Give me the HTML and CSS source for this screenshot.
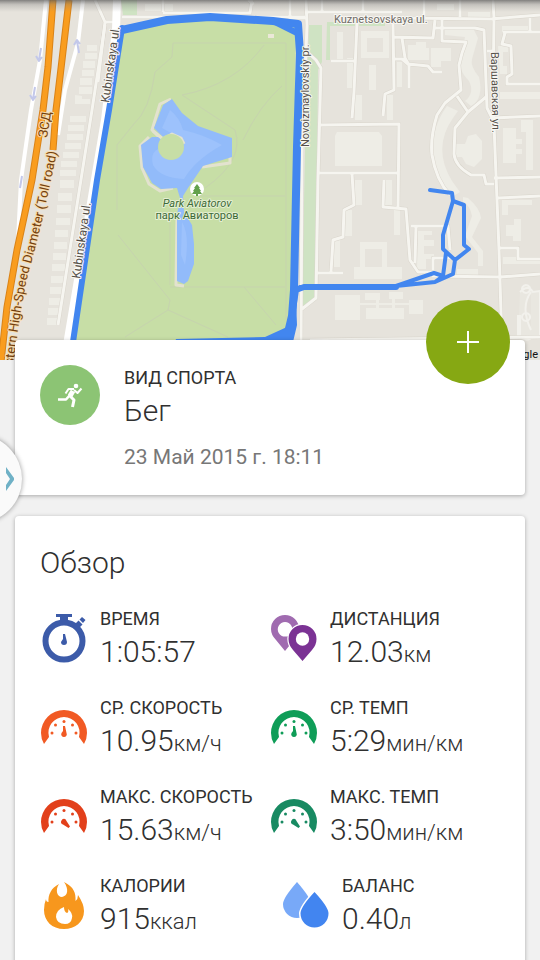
FILE: index.html
```html
<!DOCTYPE html>
<html lang="ru">
<head>
  <meta charset="UTF-8" />
  <meta name="viewport" content="width=device-width, initial-scale=1.0" />
  <title>Бег – 23 Май 2015</title>
  <link rel="stylesheet" href="styles.css">
</head>
<body>
  <div class="wrapper">
    <div class="map">
      <svg viewBox="0 0 540 360" preserveAspectRatio="xMidYMid slice" role="img" aria-label="Маршрут">
        <defs>
          <linearGradient id="topShade" x1="0" y1="0" x2="0" y2="1">
            <stop offset="0" stop-color="#555" stop-opacity="0.7" />
            <stop offset="0.4" stop-color="#777" stop-opacity="0.3" />
            <stop offset="1" stop-color="#888" stop-opacity="0" />
          </linearGradient>
          <path id="tollPath" d="M-8 450 L14 360 Q19 318 27 278 Q36 246 43 217 L57 152" />
        </defs>
        <rect width="540" height="360" fill="#e6e3dc" />

        <!-- green areas -->
        <path class="park" d="M122 30 L170 20 L210 18 L296 24 L293 300 L290 330 L265 342 L73 342 Z" />
        <path class="lawn" d="M309 25 H322 V62 L318 70 L316 300 L302 310 L305 150 Z M327 22 L385 22 V26 H330 V60 H326 Z M121 0 H137 V15 H123 Z" />

        <!-- buildings -->
        <g class="building">
          <path d="M87 45h10v6h-10z M85 53h12v6h-12z M83 61h12v7h-12z M82 70h12v6h-12z M80 78h12v7h-12z M79 87h13v7h-13z M75 95l7 1v8h-7z M82 99h8v5h-8z" />
          <path d="M70 116h16v6h-16z M68 125h16v6h-16z M67 134h16v6h-16z M65 143h16v6h-16z M63 152h16v6h-16z M61 161h16v6h-16z M60 170h16v6h-16z M60 180h14v8h-14z M58 193h14v8h-14z M57 205h14v8h-14z M56 218h14v7h-14z M55 230h13v7h-13z M54 242h13v7h-13z M53 253h13v7h-13z M52 264h13v7h-13z M51 276h13v7h-13z M50 287h12v7h-12z M49 298h11v7h-11z M48 308h11v7h-11z M47 318h10v7h-10z" />
          <path fill-rule="evenodd" d="M361 31h28v27h-28z M367 38v14h16v-14z" />
          <path d="M337 32h6v28h-6z M347 58h6v30h-6z M369 65h7v25h-7z M397 62h5v25h-5z M355 95h7v25h-7z M387 95h6v25h-6z" />
          <path d="M337 132h42l3 4v30h-47v-30z" />
          <path d="M408 45h8v-3h10v6h3v12h-21z M431 48h20v13h-10v6h-10z" />
          <path d="M145 4h28v7h-28z M437 4h17v6h-17z M468 12h22v5h-22z" />
          <path d="M445 29l28-1 5 10-6 21q-2 7 7 18q5 22-8 29l-6-5q10-8 4-20q-12-12-8-24l4-20-20-2z" />
          <path d="M447 106l11 5-5 7q-21 30-1 63l8 11-8 5q-20-19-20-46q1-26 15-45z" />
          <path d="M453 144h12l3-8 8-2 6 7v18l-8 8-8-3-4-7h-9z" />
          <path d="M355 180h7v25h-7z M384 180h8v25h-8z M344 210h8v26h-8z M334 240h6v27h-6z M394 210h6v25h-6z" />
          <path fill-rule="evenodd" d="M354 267h6v-25h27v25h15v12h-48z M365 249v18h17v-18z" />
          <path d="M418 231h14v4h-8v5h10v6h-10v8h10v5h-8v10h-9z M463 197l5 1q12 10 13 20l-9 19 11 14v15h-5v-13l-13-17 7-20q-2-11-9-14z M457 269h21v6h-21z" />
          <path d="M335 295h25v25h-25z M365 293h15v7h-15z M389 292h14v7h-14z M366 308h38v11h-38z M409 300h14v14h-14z M376 299h3v10h-3z M392 299h3v10h-3z M359 303h50v2h-50z" />
          <path d="M503 128h13v35h-13z M516 139h6v5h-6z M516 149h6v5h-6z M521 120h12v50h-7v-38h-5z M502 26h28v6h-28z M498 46h10v6h-5v14h4v8h-7z M500 92h40v7h-40z" />
          <path d="M502 200h30v5h-24v10h-6z M506 225h8v-6h7v22h-8v-5h-7z M503 257h37v7h-37z" />
        </g>
        <path class="stadium" d="M520 292q8-8 13 0l7-1v46l-7-1q-6 7-13 0v-20h-2v20 M526 285a4 4 0 1 0 .1 0 M526 313a4 4 0 1 0 .1 0 M531 292q-11 15 0 38" />

        <!-- minor roads, drawn as a grey casing with a light line over it -->
        <g class="casing">
          <path d="M122 17 H305 M163 12 V0 M163 13 H250 L252 0 M254 4 L248 0 M290 0 V20 M95 0 l10 22 h14 M105 22 l-7 60" />
          <path d="M306 0 L307 25 L302 150 L301 345 M290 18 H306 M306 51 L316 60 L321 68 L318 180 L316 298 L302 309" />
          <path d="M305 12 H402 M322 0 V12 M424 0 V17 M363 0 V12 M402 18 L490 19 L540 15 M460 0 V17 M493 0 L494 18 L493 100 L499 250 L502 344" />
          <path d="M357 23 L354 92 L352 118 M331 61 H356 M393 24 L394 90 L385 94 L383 116 M393 37 L433 38 L435 20 M393 59 H402 L408 64 L428 66 L433 72 H442 M402 38 L405 58 L409 65 V88 M435 28 H475 L484 30 L487 108 L492 118 L540 116 M442 20 V41 L466 42 L462 53 L459 65 L461 90 L445 103 L437 115 Q430 138 432 155 Q436 180 450 195 M457 96 L468 112 L486 97 M468 112 L455 128 L454 154 Q455 166 471 175 L484 175 L486 184 H494" />
          <path d="M320 125 L399 124 L398 208 M319 173 H398 M352 174 L354 205 L344 210 L343 237 L333 240 L331 272 M317 273 H343 M384 180 L383 207 L406 209 L410 260 L418 272 H435 M411 226 H448 L450 250 M416 226 L415 263 M433 270 V258 H452" />
          <path d="M503 32 H540 M505 33 L502 44 L511 46 L512 74 L507 77 V84 H540 M530 18 V32 M487 51 H494 M494 178 L540 177 M498 198 L540 196 M500 248 H518 V259 H540 M432 276 L500 277 L540 274 M310 340 L540 337" />
          <path d="M105 25 L92 110 L58 325 M79 208 H93" />
        </g>
        <g class="street">
          <path d="M122 17 H305 M163 12 V0 M163 13 H250 L252 0 M254 4 L248 0 M290 0 V20 M95 0 l10 22 h14 M105 22 l-7 60" />
          <path d="M306 0 L307 25 L302 150 L301 345 M290 18 H306 M306 51 L316 60 L321 68 L318 180 L316 298 L302 309" />
          <path d="M305 12 H402 M322 0 V12 M424 0 V17 M363 0 V12 M402 18 L490 19 L540 15 M460 0 V17 M493 0 L494 18 L493 100 L499 250 L502 344" />
          <path d="M357 23 L354 92 L352 118 M331 61 H356 M393 24 L394 90 L385 94 L383 116 M393 37 L433 38 L435 20 M393 59 H402 L408 64 L428 66 L433 72 H442 M402 38 L405 58 L409 65 V88 M435 28 H475 L484 30 L487 108 L492 118 L540 116 M442 20 V41 L466 42 L462 53 L459 65 L461 90 L445 103 L437 115 Q430 138 432 155 Q436 180 450 195 M457 96 L468 112 L486 97 M468 112 L455 128 L454 154 Q455 166 471 175 L484 175 L486 184 H494" />
          <path d="M320 125 L399 124 L398 208 M319 173 H398 M352 174 L354 205 L344 210 L343 237 L333 240 L331 272 M317 273 H343 M384 180 L383 207 L406 209 L410 260 L418 272 H435 M411 226 H448 L450 250 M416 226 L415 263 M433 270 V258 H452" />
          <path d="M503 32 H540 M505 33 L502 44 L511 46 L512 74 L507 77 V84 H540 M530 18 V32 M487 51 H494 M494 178 L540 177 M498 198 L540 196 M500 248 H518 V259 H540 M432 276 L500 277 L540 274 M310 340 L540 337" />
          <path d="M105 25 L92 110 L58 325 M79 208 H93" />
        </g>

        <!-- main roads -->
        <path class="road" d="M46 0 L40 60 L31 110 L21 180 L18 240 M83 0 L78 43 L65 90 L58 135" />
        <path class="road road-wide" d="M117 0 L116 30 L105 120 L67 345" />
        <g class="highway-edge">
          <path d="M53 0 L48 67 L43 110 L32 180 L17 250 L7 307 L1 362" />
          <path d="M69 0 L60 77 L56 110 L53 150" />
        </g>
        <g class="highway">
          <path d="M53 0 L48 67 L43 110 L32 180 L17 250 L7 307 L1 362" />
          <path d="M69 0 L60 77 L56 110 L53 150" />
        </g>
        <path class="oneway" d="M41 48 L39 60 M36 56 l3 5 3-4 M35 87 L33 99 M30 95 l3 5 3-4 M79 53 L77 41 M74 45 l3-5 3 4 M22 176 L20 188" />

        <!-- park -->
        <path class="trail" d="M173 43 L172 57 L155 72 Q150 110 133 125 L117 145 V210 M173 43 H286 V320 M264 45 Q235 85 182 95 M182 95 L235 130 Q245 160 205 188 M282 86 Q260 105 243 140 M118 235 L170 300 L168 310 L228 337 M168 310 L125 337 M170 287 H285 M244 287 L276 325 M200 196 H285 M170 200 V285" />
        <path class="shore" d="M171 99 L160 104 L152 130 L160 138 M149 137 L140 146 L142 168 L149 184 L160 191 L173 188 M202 167 L230 163 V156 M177 215 L176 285 L184 286" />
        <path class="water" d="M172 99 L163 105 L154 128 L163 137 L152 137 L141 145 L143 167 L152 183 L161 189 L177 188 L180 198 L177 215 V281 L184 284 L188 281 L194 264 L194 244 L192 225 L184 212 L183 196 L188 188 L203 166 L232 157 V138 L198 126 L182 113 Z" />
        <path class="water-deep" d="M170 110 Q180 118 183 130 Q205 135 222 145 Q195 160 184 179 Q160 178 153 165 Q150 153 158 149 L171 160 L184 149 L180 138 L162 128 Z M182 222 Q190 235 185 265 L181 255 Z" />
        <path class="shore" d="M153 131 L163 139 L172 134 L181 138 L184 144" />
        <circle cx="171" cy="147" r="13" fill="#c7dea6" />
        <rect x="268" y="34" width="6" height="4" fill="#ebe8d8" />
        <circle cx="197" cy="189" r="7" fill="#fff" />
        <path d="M197 184 l3 4h-1l2 3h-1l2 3h-4v2h-2v-2h-4l2-3h-1l2-3h-1z" fill="#63a14c" />

        <!-- recorded track -->
        <g class="track">
          <path class="track-thick" d="M122 30 L167 20 L210 17 L273 21 L298 24 L300 53 L297 147 L294 290 L292 316 L287 337" />
          <path d="M122 28 L109 110 L97 180 L73 342 M273 21 L297 33 M292 316 L296 290 L304 287 L396 287" />
          <path class="track-thin" d="M300 287 L396 286 L434 273 L443 276 L435 282 L396 286 M430 190 L452 193 L453 201 L443 235 L443 249 L455 260 L453 274 L435 282 M453 201 L464 205 L464 245 L469 249 L455 260 M446 253 L443 276" />
        </g>
        <path d="M175 342 L176 339 L265 337 L287 327 L296 300 L297 325 L293 342 Z" fill="#4286ef" />

        <!-- labels -->
        <g class="label">
          <text transform="translate(109 103) rotate(-82)" font-size="12">Kubinskaya ul.</text>
          <text transform="translate(80 279) rotate(-82)" font-size="12">Kubinskaya ul.</text>
          <text transform="translate(309 147) rotate(-90)" font-size="11">Novoizmaylovskiy pr.</text>
          <text transform="translate(491 52) rotate(89)" font-size="11">Варшавская ул.</text>
          <text x="334" y="23" font-size="11" class="label-gray">Kuznetsovskaya ul.</text>
          <text x="322" y="348" font-size="11">Бассейная ул.</text>
        </g>
        <g class="label label-highway">
          <text transform="translate(47 138) rotate(-81)" font-size="13">ЗСД</text>
          <text font-size="13" text-anchor="end"><textPath href="#tollPath" startOffset="100%">Western High-Speed Diameter (Toll road)</textPath></text>
        </g>
        <g class="label label-park" text-anchor="middle">
          <text x="197" y="207" font-size="11" font-style="italic">Park Aviatorov</text>
          <text x="197" y="219" font-size="11">парк Авиаторов</text>
        </g>
        <text x="538" y="358" text-anchor="end" class="copyright">Google</text>
        <rect width="540" height="12" fill="url(#topShade)" />
      </svg>
    </div>

    <main class="content">
      <section class="card sport">
        <button class="fab" type="button" aria-label="Добавить">
          <svg viewBox="0 0 22 22"><path d="M11 0 V22 M0 11 H22" stroke="#fff" stroke-width="2" /></svg>
        </button>
        <div class="sport-icon">
          <svg viewBox="0 0 60 60">
            <circle cx="36" cy="21" r="2.3" fill="#fff" />
            <g fill="none" stroke="#fff" stroke-width="2" stroke-linejoin="round">
              <path d="M34 24 L28.5 24 L25.5 28.5" />
              <path d="M34 25 L37.5 28 L41.5 23.5" />
              <path d="M33 26 L30 31" stroke-width="5" />
              <path d="M30 31 L34 35 L32.5 42" stroke-width="3" />
              <path d="M30 30 L26 34.5 H18" stroke-width="2.6" />
            </g>
          </svg>
        </div>
        <div class="sport-text">
          <div class="caption">ВИД СПОРТА</div>
          <h1 class="value">Бег</h1>
          <div class="date">23 Май 2015 г. 18:11</div>
        </div>
      </section>

      <section class="card overview">
        <h2 class="value">Обзор</h2>
        <div class="stats">
          <div class="stat">
            <svg class="stat-icon" viewBox="0 0 48 50">
              <circle cx="24" cy="27" r="18.5" fill="none" stroke="#3c5ba9" stroke-width="6" />
              <path d="M16 0 H32 V3 H28 V8 H20 V3 H16 Z M35 10 l3.5-3.5 4 4 -3.5 3.5z M39.5 5.5 l2.5-2.5 3.5 3 -2.5 3z" fill="#3c5ba9" />
              <path d="M23 20 H25 L27 28 A3 3 0 1 1 21 28 L23 25 Z" fill="#3c5ba9" />
            </svg>
            <div>
              <div class="caption">ВРЕМЯ</div>
              <div class="value">1:05:57</div>
            </div>
          </div>
          <div class="stat">
            <svg class="stat-icon" viewBox="0 0 48 50">
              <path fill-rule="evenodd" d="M15 37 L6 26 Q1 21 1 15 A14 14 0 0 1 29 15 Q29 21 24 26 Z M15 8 A7.3 7.3 0 1 0 15.1 8 Z" fill="#a06bb0" />
              <path d="M32.5 47 L23 36 Q18.5 31 18.5 25 A14 14 0 0 1 46.5 25 Q46.5 31 42 36 Z" fill="#7b3294" stroke="#fff" stroke-width="2.4" paint-order="stroke" />
              <circle cx="32.5" cy="25" r="6.7" fill="#fff" />
            </svg>
            <div>
              <div class="caption">ДИСТАНЦИЯ</div>
              <div class="value">12.03<span class="unit">км</span></div>
            </div>
          </div>
          <div class="stat">
            <svg class="stat-icon orange" viewBox="0 0 48 50">
              <path d="M4 41 Q1 36 1 30 A23 23 0 0 1 47 30 Q47 36 44 41 L39 34 A15.6 15.6 0 1 0 9 34 Z" />
              <path d="M23 23 H25 L26.5 30 A2.8 2.8 0 1 1 21.5 30 L23 28 Z" />
              <circle cx="12" cy="30" r="1.5" /><circle cx="15.5" cy="22" r="1.5" /><circle cx="24" cy="18.5" r="1.5" /><circle cx="32.5" cy="22" r="1.5" /><circle cx="36" cy="30" r="1.5" />
            </svg>
            <div>
              <div class="caption">СР. СКОРОСТЬ</div>
              <div class="value">10.95<span class="unit">км/ч</span></div>
            </div>
          </div>
          <div class="stat">
            <svg class="stat-icon green" viewBox="0 0 48 50">
              <path d="M4 41 Q1 36 1 30 A23 23 0 0 1 47 30 Q47 36 44 41 L39 34 A15.6 15.6 0 1 0 9 34 Z" />
              <path d="M23 23 H25 L26.5 30 A2.8 2.8 0 1 1 21.5 30 L23 28 Z" />
              <circle cx="12" cy="30" r="1.5" /><circle cx="15.5" cy="22" r="1.5" /><circle cx="24" cy="18.5" r="1.5" /><circle cx="32.5" cy="22" r="1.5" /><circle cx="36" cy="30" r="1.5" />
            </svg>
            <div>
              <div class="caption">СР. ТЕМП</div>
              <div class="value">5:29<span class="unit">мин/км</span></div>
            </div>
          </div>
          <div class="stat">
            <svg class="stat-icon red" viewBox="0 0 48 50">
              <path d="M4 41 Q1 36 1 30 A23 23 0 0 1 47 30 Q47 36 44 41 L39 34 A15.6 15.6 0 1 0 9 34 Z" />
              <path d="M21.5 28.5 A2.6 2.6 0 0 1 26.5 29 L30 34.5 L28.5 36 L23 32.5 A2.5 2.5 0 0 1 21.5 28.5 Z" />
              <circle cx="12" cy="30" r="1.5" /><circle cx="15.5" cy="22" r="1.5" /><circle cx="24" cy="18.5" r="1.5" /><circle cx="32.5" cy="22" r="1.5" /><circle cx="36" cy="30" r="1.5" />
            </svg>
            <div>
              <div class="caption">МАКС. СКОРОСТЬ</div>
              <div class="value">15.63<span class="unit">км/ч</span></div>
            </div>
          </div>
          <div class="stat">
            <svg class="stat-icon teal" viewBox="0 0 48 50">
              <path d="M4 41 Q1 36 1 30 A23 23 0 0 1 47 30 Q47 36 44 41 L39 34 A15.6 15.6 0 1 0 9 34 Z" />
              <path d="M21.5 28.5 A2.6 2.6 0 0 1 26.5 29 L30 34.5 L28.5 36 L23 32.5 A2.5 2.5 0 0 1 21.5 28.5 Z" />
              <circle cx="12" cy="30" r="1.5" /><circle cx="15.5" cy="22" r="1.5" /><circle cx="24" cy="18.5" r="1.5" /><circle cx="32.5" cy="22" r="1.5" /><circle cx="36" cy="30" r="1.5" />
            </svg>
            <div>
              <div class="caption">МАКС. ТЕМП</div>
              <div class="value">3:50<span class="unit">мин/км</span></div>
            </div>
          </div>
          <div class="stat">
            <svg class="stat-icon" viewBox="0 0 48 50">
              <path d="M24 1 C34 6 36 12 35.5 20 Q38 18 38 14 Q44 23 44 30 C44 41 35 48 24 48 C12 48 4 40 4 29 Q4 23 6 18 Q6 21 8.5 21 C8 14 11 7 19 3 C15 9 17 16 22 16 C28 15 29 8 24 1 Z" fill="#f7971d" />
              <path d="M24 26 Q24 31 27 32 Q29 31 28 28 Q33 32 32 37 Q31 43 25 43 Q17 43 16 36 Q16 29 24 26 Z" fill="#fff" />
            </svg>
            <div>
              <div class="caption">КАЛОРИИ</div>
              <div class="value">915<span class="unit">ккал</span></div>
            </div>
          </div>
          <div class="stat stat-indent">
            <svg class="stat-icon" viewBox="0 0 48 50">
              <path d="M15 1 Q29 17 29 23 A14 14 0 0 1 1 23 Q1 17 15 1 Z" fill="#78a9f8" />
              <path d="M32.5 11 Q46.5 26 46.5 32.5 A14 14 0 0 1 18.5 32.5 Q18.5 26 32.5 11 Z" fill="#4285f0" stroke="#fff" stroke-width="3" paint-order="stroke" />
            </svg>
            <div>
              <div class="caption">БАЛАНС</div>
              <div class="value">0.40<span class="unit">л</span></div>
            </div>
          </div>
        </div>
      </section>
    </main>

    <button class="drawer-handle" type="button" aria-label="Открыть панель">
      <svg viewBox="0 0 8 24"><path d="M0 0 L8 11 V13 L0 24 V18 L4 12 L0 6 Z" fill="#6fb1c6" /></svg>
    </button>
  </div>
</body>
</html>
```
FILE: styles.css
```css
* { box-sizing: border-box; margin: 0; padding: 0; }
body {
  font-family: Roboto, 'Noto Sans', sans-serif;
  background: #f1f1f1;
  color: #303030;
}
.wrapper {
  display: flex;
  flex-direction: column;
  min-height: 100vh;
}
button {
  border: none;
  cursor: pointer;
}

/* Map */
.map {
  height: 360px;
  overflow: hidden;
}
.map svg {
  display: block;
  width: 100%;
  height: 100%;
}
.park { fill: #c7dea6; }
.lawn { fill: #cfe3c3; }
.building { fill: #eeede6; }
.stadium {
  fill: #e9e7e0;
  stroke: #f2f1ec;
  stroke-width: 2;
}
.casing, .street, .highway, .highway-edge, .road, .trail, .shore, .track, .oneway {
  fill: none;
  stroke-linejoin: round;
}
.casing {
  stroke: #d9d5cc;
  stroke-width: 4;
}
.street {
  stroke: #f6f5f0;
  stroke-width: 3;
}
.road {
  stroke: #fff;
  stroke-width: 4;
}
.road-wide { stroke-width: 8; }
.highway-edge {
  stroke: #d98318;
  stroke-width: 7;
}
.highway {
  stroke: #f99d1f;
  stroke-width: 5;
}
.oneway {
  stroke: #c3c8ea;
  stroke-width: 2;
}
.trail {
  stroke: #c6d3ae;
  stroke-width: 1;
}
.shore {
  stroke: #e3e2cf;
  stroke-width: 3;
}
.water { fill: #92bbfa; }
.water-deep { fill: #9dc2fc; }
.track {
  stroke: #4286ef;
  stroke-width: 6;
  stroke-linecap: round;
}
.track-thick { stroke-width: 8; }
.track-thin { stroke-width: 4; }
.label {
  fill: #55504a;
  stroke: #f8f7f3;
  stroke-width: 2px;
  stroke-linejoin: round;
  paint-order: stroke;
}
.label-gray { fill: #706c66; }
.label-highway {
  fill: #733e0c;
  stroke: #f8dcae;
}
.label-park {
  fill: #3d6a38;
  stroke: #e4efd2;
}
.copyright {
  fill: #111;
  font-size: 11px;
}

/* Cards */
.content {
  flex: 1;
  display: flex;
  flex-direction: column;
  gap: 21px;
  margin-top: -20px;
  padding: 0 15px;
}
.card {
  position: relative;
  background: #fff;
  border-radius: 4px;
  box-shadow: 0 1px 4px rgba(0,0,0,0.3);
}
.sport {
  display: flex;
  gap: 24px;
  padding: 25px;
}
.fab {
  position: absolute;
  top: -40px;
  right: 15px;
  width: 84px;
  height: 84px;
  display: flex;
  align-items: center;
  justify-content: center;
  border-radius: 50%;
  background: #86a813;
}
.fab svg {
  width: 22px;
  height: 22px;
}
.sport-icon {
  width: 60px;
  height: 60px;
  border-radius: 50%;
  background: #8cc474;
}
.sport-icon svg { display: block; }
.caption {
  font-size: 18px;
  line-height: 26px;
}
.value {
  font-size: 30px;
  font-weight: 300;
  line-height: 40px;
}
.unit {
  font-size: 22px;
  line-height: 1;
}
.date {
  margin-top: 13px;
  font-size: 21px;
  line-height: 26px;
  color: #777;
}

/* Overview */
.overview {
  flex: 1;
  padding: 27px 25px;
  border-radius: 4px 4px 0 0;
}
.stats {
  display: grid;
  grid-template-columns: 1fr 1fr;
  row-gap: 23px;
  margin-top: 23px;
}
.stat {
  display: flex;
  align-items: center;
  gap: 12px;
  white-space: nowrap;
}
.stat-indent { padding-left: 12px; }
.stat-icon {
  flex: none;
  width: 48px;
  height: 50px;
}
.orange { fill: #f15a24; }
.green { fill: #0f9d58; }
.red { fill: #e2401b; }
.teal { fill: #188a62; }

/* Side panel handle */
.drawer-handle {
  position: fixed;
  left: -66px;
  top: 435px;
  width: 88px;
  height: 88px;
  display: flex;
  align-items: center;
  justify-content: flex-end;
  padding-right: 8px;
  border-radius: 50%;
  background: #fafafa;
  box-shadow: 0 0 5px rgba(0,0,0,0.4);
}
.drawer-handle svg {
  width: 8px;
  height: 24px;
}
```
